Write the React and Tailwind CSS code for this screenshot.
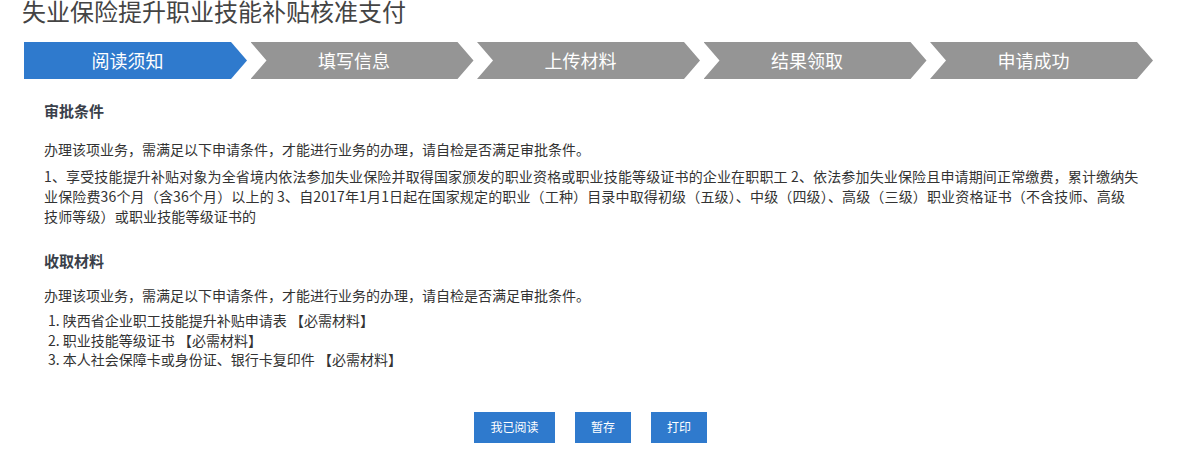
import React from "react";

const steps = ["阅读须知", "填写信息", "上传材料", "结果领取", "申请成功"];

function Step({ label, index }) {
  const first = index === 0;
  return (
    <div
      className={
        "flex h-[37px] w-[223px] shrink-0 items-center justify-center pr-4 text-[18px] text-white " +
        (first
          ? "bg-[#2f7acd] [clip-path:polygon(0_0,calc(100%-16px)_0,100%_50%,calc(100%-16px)_100%,0_100%)]"
          : "bg-[#959595] [clip-path:polygon(0_0,calc(100%-16px)_0,100%_50%,calc(100%-16px)_100%,0_100%,16px_50%)]")
      }
    >
      {label}
    </div>
  );
}

export default function App() {
  return (
    <div
      className="h-[454px] w-[1200px] overflow-hidden bg-white text-[#333]"
      style={{ fontFamily: '"Noto Sans CJK SC", "Noto Sans", sans-serif' }}
    >
      <div className="w-[1153px] pl-6">
        <h1 className="-mt-[7px] ml-[-2px] h-[35px] text-[24px] leading-[36px] font-normal text-[#444]">
          失业保险提升职业技能补贴核准支付
        </h1>
        <div className="mt-[14px] flex gap-[3.5px]">
          {steps.map((s, i) => (
            <Step key={s} label={s} index={i} />
          ))}
        </div>
        <div className="pl-5">
          <h2 className="mt-[22px] text-[15px] leading-[20px] font-bold text-[#3a3f4a]">审批条件</h2>
          <p className="mt-[18px] text-[14px] leading-[20px]">
            办理该项业务，需满足以下申请条件，才能进行业务的办理，请自检是否满足审批条件。
          </p>
          <p className="mt-[7px] text-[14px] leading-[20px] tracking-[0.15px]">
            1、享受技能提升补贴对象为全省境内依法参加失业保险并取得国家颁发的职业资格或职业技能等级证书的企业在职职工 2、依法参加失业保险且申请期间正常缴费，累计缴纳失
            <br />
            业保险费36个月（含36个月）以上的 3、自2017年1月1日起在国家规定的职业（工种）目录中取得初级（五级）、中级（四级）、高级（三级）职业资格证书（不含技师、高级
            <br />
            技师等级）或职业技能等级证书的
          </p>
          <h2 className="mt-[25px] text-[15px] leading-[20px] font-bold text-[#3a3f4a]">收取材料</h2>
          <p className="mt-[14px] text-[14px] leading-[20px]">
            办理该项业务，需满足以下申请条件，才能进行业务的办理，请自检是否满足审批条件。
          </p>
          <ol className="mt-[6px] pl-[4px] text-[14px] leading-[19.5px]">
            <li>1. 陕西省企业职工技能提升补贴申请表 【必需材料】</li>
            <li>2. 职业技能等级证书 【必需材料】</li>
            <li>3. 本人社会保障卡或身份证、银行卡复印件 【必需材料】</li>
          </ol>
        </div>
        <div className="mt-[42px] flex justify-center gap-5 pl-1">
          <button className="h-[31px] w-[81px] bg-[#2f7acd] text-[12px] text-white">我已阅读</button>
          <button className="h-[31px] w-[56px] bg-[#2f7acd] text-[12px] text-white">暂存</button>
          <button className="h-[31px] w-[56px] bg-[#2f7acd] text-[12px] text-white">打印</button>
        </div>
      </div>
    </div>
  );
}
